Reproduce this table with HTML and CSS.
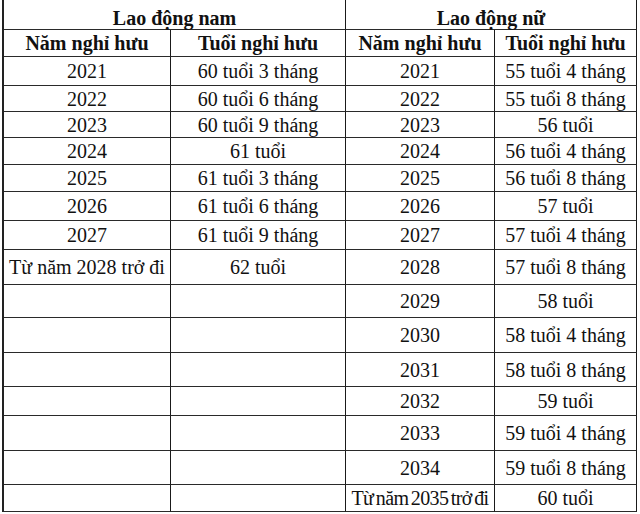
FILE: index.html
```html
<!DOCTYPE html>
<html lang="vi">
<head>
<meta charset="utf-8">
<title>Tuổi nghỉ hưu</title>
<link rel="stylesheet" href="styles.css">
</head>
<body>
<div class="table">
  <div class="cell head span2 r30">Lao động nam</div>
  <div class="cell head span2 r30">Lao động nữ</div>

  <div class="cell head">Năm nghỉ hưu</div>
  <div class="cell head">Tuổi nghỉ hưu</div>
  <div class="cell head">Năm nghỉ hưu</div>
  <div class="cell head">Tuổi nghỉ hưu</div>

  <div class="cell">2021</div><div class="cell">60 tuổi 3 tháng</div><div class="cell">2021</div><div class="cell">55 tuổi 4 tháng</div>
  <div class="cell">2022</div><div class="cell">60 tuổi 6 tháng</div><div class="cell">2022</div><div class="cell">55 tuổi 8 tháng</div>
  <div class="cell">2023</div><div class="cell">60 tuổi 9 tháng</div><div class="cell">2023</div><div class="cell">56 tuổi</div>
  <div class="cell">2024</div><div class="cell">61 tuổi</div><div class="cell">2024</div><div class="cell">56 tuổi 4 tháng</div>
  <div class="cell">2025</div><div class="cell">61 tuổi 3 tháng</div><div class="cell">2025</div><div class="cell">56 tuổi 8 tháng</div>
  <div class="cell">2026</div><div class="cell">61 tuổi 6 tháng</div><div class="cell">2026</div><div class="cell">57 tuổi</div>
  <div class="cell">2027</div><div class="cell">61 tuổi 9 tháng</div><div class="cell">2027</div><div class="cell">57 tuổi 4 tháng</div>
  <div class="cell">Từ năm 2028 trở đi</div><div class="cell">62 tuổi</div><div class="cell">2028</div><div class="cell">57 tuổi 8 tháng</div>
  <div class="cell"></div><div class="cell"></div><div class="cell">2029</div><div class="cell">58 tuổi</div>
  <div class="cell"></div><div class="cell"></div><div class="cell">2030</div><div class="cell">58 tuổi 4 tháng</div>
  <div class="cell"></div><div class="cell"></div><div class="cell">2031</div><div class="cell">58 tuổi 8 tháng</div>
  <div class="cell"></div><div class="cell"></div><div class="cell">2032</div><div class="cell">59 tuổi</div>
  <div class="cell"></div><div class="cell"></div><div class="cell">2033</div><div class="cell">59 tuổi 4 tháng</div>
  <div class="cell"></div><div class="cell"></div><div class="cell">2034</div><div class="cell">59 tuổi 8 tháng</div>
  <div class="cell"></div><div class="cell"></div><div class="cell narrow">Từ năm 2035 trở đi</div><div class="cell">60 tuổi</div>
</div>
</body>
</html>
```

FILE: styles.css
```css
html, body {
  margin: 0;
  padding: 0;
  background: #ffffff;
}

body {
  padding-left: 2px;
  font-family: "Liberation Serif", "Times New Roman", serif;
  font-size: 20px;
  color: #111111;
}

.table {
  display: grid;
  width: 635px;
  box-sizing: border-box;
  border-left: 2px solid #222222;
  grid-template-columns: 167px 175px 149px 142px;
  grid-template-rows: 30px 27px 29px 26px 26px 27px 27px 29px 29px 35px 33px 35px 34px 29px 35px 34px 27px;
}

.cell {
  box-sizing: border-box;
  border-right: 1px solid #1a1a1a;
  border-bottom: 1px solid #2a2a2a;
  display: flex;
  align-items: center;
  justify-content: center;
  padding-bottom: 0;
  line-height: 22px;
  white-space: nowrap;
}

.head {
  font-weight: bold;
}

.span2 {
  grid-column: span 2;
}

.r30 {
  align-items: flex-start;
  padding-top: 7px;
  padding-bottom: 0;
}

.narrow {
  letter-spacing: -0.6px;
  word-spacing: -2px;
}
```
